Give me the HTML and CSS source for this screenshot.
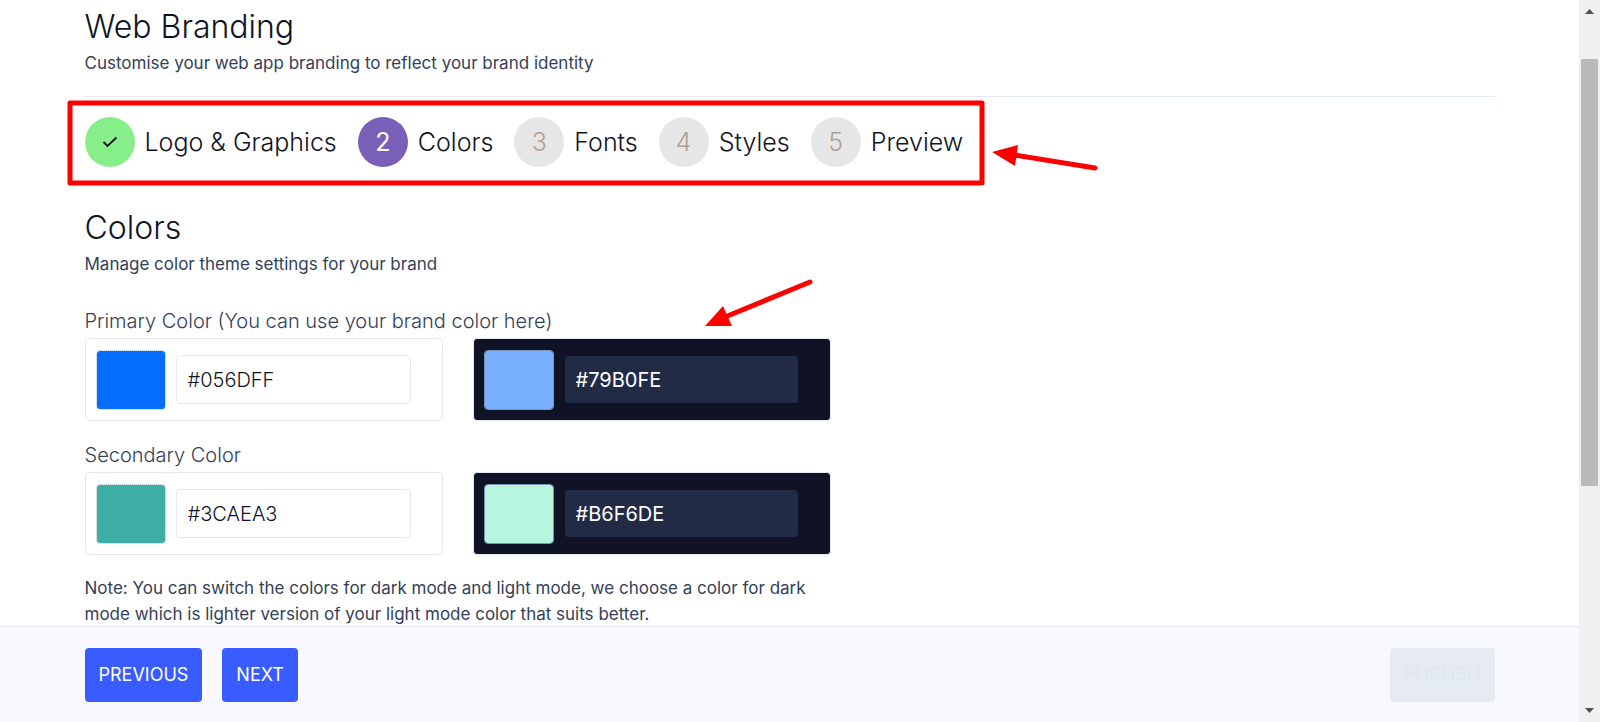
FILE: index.html
```
<!DOCTYPE html>
<html lang="en">
<head>
  <meta charset="UTF-8">
  <meta name="viewport" content="width=device-width, initial-scale=1">
  <title>Web Branding</title>
  <link rel="stylesheet" href="styles.css">
</head>
<body>
<div class="app">
  <main class="content">
    <div class="container">
      <header class="page_header">
        <h1>Web Branding</h1>
        <p>Customise your web app branding to reflect your brand identity</p>
      </header>

      <ol class="steps">
        <li class="step done">
          <span class="step_icon">
            <svg width="16" height="12" viewBox="0 0 16 12"><path d="M1.5 6 L5.5 10 L14.5 1.5" fill="none" stroke="#10131c" stroke-width="1.8"/></svg>
          </span>
          Logo &amp; Graphics
        </li>
        <li class="step active"><span class="step_icon">2</span>Colors</li>
        <li class="step"><span class="step_icon">3</span>Fonts</li>
        <li class="step"><span class="step_icon">4</span>Styles</li>
        <li class="step"><span class="step_icon">5</span>Preview</li>
      </ol>

      <section class="colors">
        <h2>Colors</h2>
        <p>Manage color theme settings for your brand</p>

        <div class="field">
          <label for="primary">Primary Color (You can use your brand color here)</label>
          <div class="pair">
            <div class="picker">
              <input type="color" class="swatch" value="#056dff" aria-label="Primary light">
              <input type="text" class="hex" id="primary" value="#056DFF">
            </div>
            <div class="picker dark">
              <input type="color" class="swatch" value="#79b0fe" aria-label="Primary dark">
              <input type="text" class="hex" value="#79B0FE" aria-label="Primary dark hex">
            </div>
          </div>
        </div>

        <div class="field">
          <label for="secondary">Secondary Color</label>
          <div class="pair">
            <div class="picker">
              <input type="color" class="swatch" value="#3caea3" aria-label="Secondary light">
              <input type="text" class="hex" id="secondary" value="#3CAEA3">
            </div>
            <div class="picker dark">
              <input type="color" class="swatch" value="#b6f6de" aria-label="Secondary dark">
              <input type="text" class="hex" value="#B6F6DE" aria-label="Secondary dark hex">
            </div>
          </div>
        </div>

        <p class="note">Note: You can switch the colors for dark mode and light mode, we choose a color for dark mode which is lighter version of your light mode color that suits better.</p>
      </section>
    </div>
  </main>

  <footer class="footer">
    <div class="container footer_row">
      <button type="button" class="btn">PREVIOUS</button>
      <button type="button" class="btn">NEXT</button>
      <button type="button" class="btn publish" disabled>PUBLISH</button>
    </div>
  </footer>
</div>

<div class="scrollbar">
  <svg width="9" height="5" viewBox="0 0 9 5"><path d="M0 5 L4.5 0 L9 5 Z" fill="#505050"/></svg>
  <div class="track"><div class="thumb"></div></div>
  <svg width="9" height="5" viewBox="0 0 9 5"><path d="M0 0 L4.5 5 L9 0 Z" fill="#505050"/></svg>
</div>

<!-- callouts drawn over the page -->
<svg class="marks" width="1110" height="340" viewBox="0 0 1110 340">
  <g fill="none" stroke="#ff0000" stroke-width="5" stroke-linecap="round" stroke-linejoin="round">
    <rect x="70" y="103" width="912" height="80"/>
    <path d="M1014 155 L1095 168"/>
    <path d="M725 317 L810 282"/>
  </g>
  <path d="M992 152 L1018 145 L1015 166 Z M705 326 L723 306 L732 326 Z" fill="#ff0000"/>
</svg>
</body>
</html>
```

FILE: styles.css
```
* {
  box-sizing: border-box;
}

body {
  margin: 0;
  display: flex;
  height: 100vh;
  overflow: hidden;
  background: #ffffff;
  color: #334158;
  font-family: Inter, "Liberation Sans", sans-serif;
  font-size: 17px;
  line-height: 26px;
}

h1, h2, p, ol {
  margin: 0;
  padding: 0;
}

h1, h2 {
  color: #0f1424;
  font-size: 32px;
  font-weight: 300;
  line-height: 40px;
}

.app {
  flex: 1;
  min-width: 0;
  display: flex;
  flex-direction: column;
}

.content {
  flex: 1;
  min-height: 0;
  overflow: hidden;
}

.container {
  max-width: 1450px;
  margin: 0 auto;
  padding: 0 20px;
}

.page_header {
  padding: 7px 0 20px;
  border-bottom: 1px solid #e2e8f4;
}

.page_header p, .colors h2 + p {
  margin-top: 3px;
}

.steps {
  display: flex;
  gap: 21px;
  padding: 20px 0 41px;
  list-style: none;
  color: #10131c;
  font-size: 25px;
  font-weight: 300;
}

.step {
  display: flex;
  align-items: center;
  gap: 10px;
  white-space: nowrap;
}

.step_icon {
  display: flex;
  align-items: center;
  justify-content: center;
  width: 50px;
  height: 50px;
  border-radius: 50%;
  background: #e6e6e6;
  color: #b09f95;
}

.done .step_icon {
  background: #86ef8a;
}

.active .step_icon {
  background: #7a5fb8;
  color: #ffffff;
  font-weight: 400;
}

.colors {
  max-width: 746px;
}

.field {
  margin-top: 31px;
}

.field + .field {
  margin-top: 21px;
}

.field label {
  display: block;
  padding-bottom: 4px;
  font-size: 20px;
  font-weight: 300;
}

.pair {
  display: grid;
  grid-template-columns: repeat(2, minmax(0, 1fr));
  gap: 30px;
}

.picker {
  display: flex;
  align-items: center;
  gap: 10px;
  height: 83px;
  padding: 0 31px 0 10px;
  border: 1px solid #e6e9f4;
  border-radius: 4px;
}

.dark {
  background: #101325;
}

.swatch {
  width: 70px;
  height: 60px;
  padding: 0;
  border: 1px dotted #b8c4cc;
  border-radius: 4px;
  background: none;
  appearance: none;
  overflow: hidden;
}

.dark .swatch {
  border: 1px solid #7a94bd;
}

.swatch::-webkit-color-swatch-wrapper {
  padding: 0;
}

.swatch::-webkit-color-swatch {
  border: 0;
}

.hex {
  flex: 1;
  min-width: 0;
  height: 49px;
  padding: 0 11px;
  border: 1px solid #e6e9f4;
  border-radius: 4px;
  background: #ffffff;
  color: #101325;
  font: inherit;
  font-size: 20px;
  font-weight: 300;
}

.dark .hex {
  border-color: #101325;
  background: #222b45;
  color: #ffffff;
  font-weight: 400;
}

.note {
  margin-top: 20px;
}

.footer {
  height: 96px;
  padding-top: 21px;
  border-top: 1px solid #e2e8f4;
  background: #f7f9fe;
}

.footer_row {
  display: flex;
  gap: 20px;
}

.btn {
  height: 54px;
  padding: 0 14px;
  border: 0;
  border-radius: 4px;
  background: #385cff;
  color: #ffffff;
  font: inherit;
  font-size: 18px;
}

.publish {
  margin-left: auto;
  background: #e6eaf1;
  color: #dce7ef;
}

.scrollbar {
  display: flex;
  flex-direction: column;
  align-items: center;
  width: 21px;
  padding: 9px 2px;
  background: #f0f0f0;
}

.track {
  flex: 1;
  width: 100%;
  padding: 45px 0 11px;
}

.thumb {
  height: 67%;
  background: #bababa;
}

.marks {
  position: absolute;
  left: 0;
  top: 0;
  pointer-events: none;
}
```
